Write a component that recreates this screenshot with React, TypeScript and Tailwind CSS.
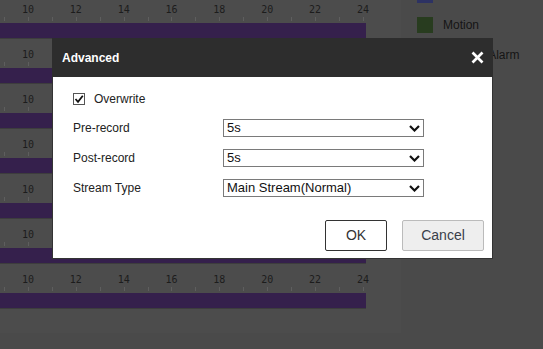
import React from "react";

const hours = ["10", "12", "14", "16", "18", "20", "22", "24"];

function TimelineRow() {
  return (
    <div className="h-[45px] flex flex-col">
      <div className="pt-[4px] h-[16px] flex pl-[4px]">
        {hours.map((h) => (
          <div
            key={h}
            className="w-[47.86px] shrink-0 text-center text-[10px] leading-[12px] text-[#1c1c1c]"
            style={{ fontFamily: '"DejaVu Sans Mono", monospace' }}
          >
            {h}
          </div>
        ))}
      </div>
      <div className="mt-[1px] h-[4px] flex pl-[4px]">
        {Array.from({ length: 16 }).map((_, i) => (
          <div key={i} className="w-[23.93px] shrink-0 border-l border-[#5e5e5e]" />
        ))}
      </div>
      <div className="mt-[2px] h-[16px] w-[366px] bg-[#35204c] border-b border-[#3d3d3d]" />
    </div>
  );
}

function Chevron() {
  return (
    <svg width="11" height="7" viewBox="0 0 11 7" className="shrink-0">
      <polyline points="1,1 5.5,5.5 10,1" fill="none" stroke="#111" strokeWidth="2.2" />
    </svg>
  );
}

function Select({ value }: { value: string }) {
  return (
    <div className="w-[201px] h-[18px] border border-[#7a7a7a] bg-white flex items-center pl-[3px] pr-[3px] justify-between">
      <span className="text-[13px] leading-[16px] text-[#111]">{value}</span>
      <Chevron />
    </div>
  );
}

function Row({ label, value }: { label: string; value: string }) {
  return (
    <div className="h-[18px] flex items-center">
      <div className="w-[150px] text-[12px] text-[#222]">{label}</div>
      <Select value={value} />
    </div>
  );
}

export default function App() {
  return (
    <div
      className="relative w-[543px] h-[349px] bg-[#4a4a4a] overflow-hidden"
      style={{ fontFamily: '"Liberation Sans", Arial, sans-serif' }}
    >
      <div className="flex">
        <div className="w-[401px] h-[333px] bg-[#4c4c4c] flex flex-col">
          {Array.from({ length: 7 }).map((_, i) => (
            <TimelineRow key={i} />
          ))}
        </div>
        <div className="pl-[16px] -mt-[13px] flex flex-col gap-[14px]">
          <div className="h-[16px] flex items-center gap-[10px]">
            <div className="w-[16px] h-[16px] bg-[#2d3263]" />
            <span className="text-[12px] leading-[16px] text-[#151515]">Continuous</span>
          </div>
          <div className="h-[16px] flex items-center gap-[10px]">
            <div className="w-[16px] h-[16px] bg-[#283c1f]" />
            <span className="text-[12px] leading-[16px] text-[#151515]">Motion</span>
          </div>
          <div className="h-[16px] flex items-center gap-[10px]">
            <div className="w-[16px] h-[16px] bg-[#3b2a16]" />
            <span className="text-[12px] leading-[16px] text-[#151515] whitespace-nowrap">Motion | Alarm</span>
          </div>
        </div>
      </div>

      <div className="absolute left-[52px] top-[38px] w-[441px] h-[221px] border border-[#333] bg-white flex flex-col">
        <div className="h-[39px] bg-[#2d2d2d] flex items-center justify-between pl-[10px] pr-[9px] -mx-[1px] -mt-[1px]">
          <span className="text-white font-bold text-[12px]">Advanced</span>
          <svg width="13" height="13" viewBox="0 0 13 13">
            <line x1="1.5" y1="1.5" x2="11.5" y2="11.5" stroke="white" strokeWidth="2.6" />
            <line x1="11.5" y1="1.5" x2="1.5" y2="11.5" stroke="white" strokeWidth="2.6" />
          </svg>
        </div>
        <div className="flex flex-col pl-[20px] pr-[8px] pt-[13px]">
          <div className="h-[18px] flex items-center">
            <div className="w-[12px] h-[12px] border border-[#555] bg-white flex items-center justify-center">
              <svg width="10" height="10" viewBox="0 0 10 10">
                <polyline points="1.5,5 4,7.8 8.8,1.8" fill="none" stroke="#111" strokeWidth="1.8" />
              </svg>
            </div>
            <span className="ml-[9px] text-[12px] text-[#222]">Overwrite</span>
          </div>
          <div className="mt-[11px] flex flex-col gap-[12px]">
            <Row label="Pre-record" value="5s" />
            <Row label="Post-record" value="5s" />
            <Row label="Stream Type" value="Main Stream(Normal)" />
          </div>
          <div className="mt-[23px] flex justify-end gap-[15px]">
            <button className="w-[62px] h-[31px] border border-[#333] rounded-[2px] bg-white text-[14px] text-[#333]">
              OK
            </button>
            <button className="w-[82px] h-[31px] border border-[#bbb] rounded-[2px] bg-[#eeeeee] text-[14px] text-[#3a3f4a]">
              Cancel
            </button>
          </div>
        </div>
      </div>
    </div>
  );
}
